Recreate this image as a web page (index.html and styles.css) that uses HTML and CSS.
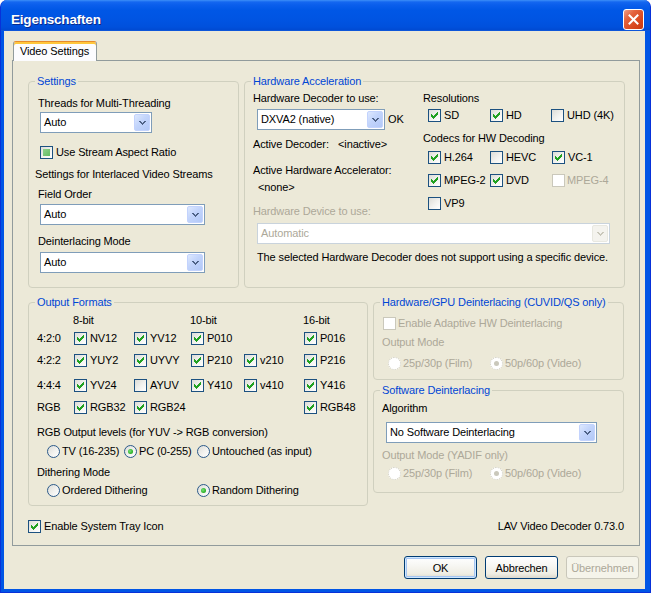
FILE: index.html
```html
<!DOCTYPE html>
<html lang="de">
<head>
<meta charset="utf-8">
<title>Eigenschaften</title>
<link rel="stylesheet" href="styles.css">
</head>
<body>
<svg class="defs" width="0" height="0" aria-hidden="true">
  <defs>
    <symbol id="ck" viewBox="0 0 11 11"><path d="M8 2h1v1h-1z M7 3h2v1h-2z M2 4h1v1h-1z M6 4h3v1h-3z M2 5h2v1h-2z M5 5h3v1h-3z M2 6h5v1h-5z M3 7h3v1h-3z M4 8h1v1h-1z" fill="#21a121" shape-rendering="crispEdges"/></symbol>
    <symbol id="dd" viewBox="0 0 7 4"><path d="M0 0h2v1h-2z M5 0h2v1h-2z M1 1h2v1h-2z M4 1h2v1h-2z M2 2h3v1h-3z M3 3h1v1h-1z" fill="currentColor" shape-rendering="crispEdges"/></symbol>
  </defs>
</svg>
<div class="window">
  <div class="titlebar">
    <span class="title">Eigenschaften</span>
    <span class="close"><svg width="11" height="11" viewBox="0 0 11 11"><path d="M1.5 1.5 L9.5 9.5 M9.5 1.5 L1.5 9.5" stroke="#fff" stroke-width="2" stroke-linecap="square"/></svg></span>
  </div>
  <div class="client">
    <div class="tabs"><div class="tab">Video Settings</div></div>
    <div class="panel">
      <div class="row1">
        <div class="group g-settings">
          <div class="legend">Settings</div>
          <div class="lbl l-threads">Threads for Multi-Threading</div>
          <div class="combo c-threads"><span class="val">Auto</span><span class="drop"><svg class="chev"><use href="#dd"/></svg></span></div>
          <div class="chk c-aspect"><span class="cb"><span class="ind"></span></span>Use Stream Aspect Ratio</div>
          <div class="lbl l-inter">Settings for Interlaced Video Streams</div>
          <div class="lbl l-field">Field Order</div>
          <div class="combo c-field"><span class="val">Auto</span><span class="drop"><svg class="chev"><use href="#dd"/></svg></span></div>
          <div class="lbl l-deint">Deinterlacing Mode</div>
          <div class="combo c-deint"><span class="val">Auto</span><span class="drop"><svg class="chev"><use href="#dd"/></svg></span></div>
        </div>
        <div class="group g-hw">
          <div class="legend">Hardware Acceleration</div>
          <div class="hw-cols">
            <div class="hw-left">
              <div class="lbl">Hardware Decoder to use:</div>
              <div class="dec-row">
                <div class="combo c-dec"><span class="val">DXVA2 (native)</span><span class="drop"><svg class="chev"><use href="#dd"/></svg></span></div>
                <span class="ok">OK</span>
              </div>
              <div class="kv"><span class="k">Active Decoder:</span><span>&lt;inactive&gt;</span></div>
              <div class="lbl l-acc">Active Hardware Accelerator:</div>
              <div class="lbl l-none">&lt;none&gt;</div>
              <div class="lbl dis l-dev">Hardware Device to use:</div>
            </div>
            <div class="hw-right">
              <div class="lbl">Resolutions</div>
              <div class="cbgrid res">
                <div class="chk"><span class="cb"><svg class="ck"><use href="#ck"/></svg></span>SD</div>
                <div class="chk"><span class="cb"><svg class="ck"><use href="#ck"/></svg></span>HD</div>
                <div class="chk"><span class="cb"></span>UHD (4K)</div>
              </div>
              <div class="lbl l-codecs">Codecs for HW Decoding</div>
              <div class="cbgrid codecs">
                <div class="chk"><span class="cb"><svg class="ck"><use href="#ck"/></svg></span>H.264</div>
                <div class="chk"><span class="cb"></span>HEVC</div>
                <div class="chk"><span class="cb"><svg class="ck"><use href="#ck"/></svg></span>VC-1</div>
                <div class="chk"><span class="cb"><svg class="ck"><use href="#ck"/></svg></span>MPEG-2</div>
                <div class="chk"><span class="cb"><svg class="ck"><use href="#ck"/></svg></span>DVD</div>
                <div class="chk dis"><span class="cb"></span>MPEG-4</div>
                <div class="chk"><span class="cb"></span>VP9</div>
              </div>
            </div>
          </div>
          <div class="combo disabled c-dev"><span class="val">Automatic</span><span class="drop"><svg class="chev"><use href="#dd"/></svg></span></div>
          <div class="lbl note">The selected Hardware Decoder does not support using a specific device.</div>
        </div>
      </div>
      <div class="row2">
        <div class="group g-out">
          <div class="legend">Output Formats</div>
          <div class="fmt-grid">
            <span></span><span class="hdr">8-bit</span><span></span><span class="hdr">10-bit</span><span></span><span class="hdr">16-bit</span>

            <span class="rl">4:2:0</span>
            <div class="chk"><span class="cb"><svg class="ck"><use href="#ck"/></svg></span>NV12</div>
            <div class="chk"><span class="cb"><svg class="ck"><use href="#ck"/></svg></span>YV12</div>
            <div class="chk"><span class="cb"><svg class="ck"><use href="#ck"/></svg></span>P010</div>
            <span></span>
            <div class="chk"><span class="cb"><svg class="ck"><use href="#ck"/></svg></span>P016</div>

            <span class="rl">4:2:2</span>
            <div class="chk"><span class="cb"><svg class="ck"><use href="#ck"/></svg></span>YUY2</div>
            <div class="chk"><span class="cb"><svg class="ck"><use href="#ck"/></svg></span>UYVY</div>
            <div class="chk"><span class="cb"><svg class="ck"><use href="#ck"/></svg></span>P210</div>
            <div class="chk"><span class="cb"><svg class="ck"><use href="#ck"/></svg></span>v210</div>
            <div class="chk"><span class="cb"><svg class="ck"><use href="#ck"/></svg></span>P216</div>

            <span class="rl">4:4:4</span>
            <div class="chk"><span class="cb"><svg class="ck"><use href="#ck"/></svg></span>YV24</div>
            <div class="chk"><span class="cb"></span>AYUV</div>
            <div class="chk"><span class="cb"><svg class="ck"><use href="#ck"/></svg></span>Y410</div>
            <div class="chk"><span class="cb"><svg class="ck"><use href="#ck"/></svg></span>v410</div>
            <div class="chk"><span class="cb"><svg class="ck"><use href="#ck"/></svg></span>Y416</div>

            <span class="rl">RGB</span>
            <div class="chk"><span class="cb"><svg class="ck"><use href="#ck"/></svg></span>RGB32</div>
            <div class="chk"><span class="cb"><svg class="ck"><use href="#ck"/></svg></span>RGB24</div>
            <span></span>
            <span></span>
            <div class="chk"><span class="cb"><svg class="ck"><use href="#ck"/></svg></span>RGB48</div>
          </div>
          <div class="lbl l-levels">RGB Output levels (for YUV -&gt; RGB conversion)</div>
          <div class="radios r-levels">
            <div class="chk"><span class="rb"></span>TV (16-235)</div>
            <div class="chk"><span class="rb on"></span>PC (0-255)</div>
            <div class="chk"><span class="rb"></span>Untouched (as input)</div>
          </div>
          <div class="lbl l-dith">Dithering Mode</div>
          <div class="radios r-dith">
            <div class="chk"><span class="rb"></span>Ordered Dithering</div>
            <div class="chk"><span class="rb on"></span>Random Dithering</div>
          </div>
        </div>
        <div class="col-right">
          <div class="group g-gpu">
            <div class="legend">Hardware/GPU Deinterlacing (CUVID/QS only)</div>
            <div class="chk dis c-adapt"><span class="cb"></span>Enable Adaptive HW Deinterlacing</div>
            <div class="lbl dis l-om">Output Mode</div>
            <div class="radios r-mode">
              <div class="chk dis"><span class="rb"></span>25p/30p (Film)</div>
              <div class="chk dis"><span class="rb on"></span>50p/60p (Video)</div>
            </div>
          </div>
          <div class="group g-sw">
            <div class="legend">Software Deinterlacing</div>
            <div class="lbl l-alg">Algorithm</div>
            <div class="combo c-alg"><span class="val">No Software Deinterlacing</span><span class="drop"><svg class="chev"><use href="#dd"/></svg></span></div>
            <div class="lbl dis l-om2">Output Mode (YADIF only)</div>
            <div class="radios r-mode r-mode2">
              <div class="chk dis"><span class="rb"></span>25p/30p (Film)</div>
              <div class="chk dis"><span class="rb on"></span>50p/60p (Video)</div>
            </div>
          </div>
        </div>
      </div>
      <div class="row3">
        <div class="chk"><span class="cb"><svg class="ck"><use href="#ck"/></svg></span>Enable System Tray Icon</div>
        <span class="version">LAV Video Decoder 0.73.0</span>
      </div>
    </div>
    <div class="buttons">
      <button class="btn default" type="button">OK</button>
      <button class="btn" type="button">Abbrechen</button>
      <button class="btn disabled" type="button">Übernehmen</button>
    </div>
  </div>
</div>
</body>
</html>
```
FILE: styles.css
```css
* { box-sizing: border-box; }
html, body { margin: 0; padding: 0; }
body {
  width: 651px;
  height: 593px;
  overflow: hidden;
  background: #ffffff;
  font-family: "Liberation Sans", Arial, sans-serif;
  font-size: 11px;
  line-height: 13px;
  letter-spacing: -0.12px;
  color: #000;
}
.defs { display: block; width: 0; height: 0; overflow: hidden; }

.window {
  width: 651px;
  height: 593px;
  display: flex;
  flex-direction: column;
  background: #0055e5;
  border: 1px solid #0831d9;
  border-top: none;
  border-radius: 7px 7px 0 0;
  overflow: hidden;
}

.titlebar {
  height: 31px;
  flex: none;
  display: flex;
  align-items: flex-start;
  justify-content: space-between;
  padding: 0 6px 0 10px;
  background: linear-gradient(to bottom,
    #3d8ff8 0px, #1467f0 2px, #0a5eec 5px, #0057e6 10px,
    #0054e2 20px, #0050dc 27px, #004ad2 30px, #1a62e0 31px);
}
.title {
  margin-top: 12px;
  color: #fff;
  font-weight: bold;
  font-size: 13.5px;
  line-height: 16px;
  letter-spacing: -0.2px;
  text-shadow: 1px 1px 0 #0a2a8a;
}
.close {
  margin-top: 9px;
  width: 21px;
  height: 21px;
  border: 1px solid #fff;
  border-radius: 3px;
  background: linear-gradient(135deg, #f0a088 0%, #e4643f 30%, #d8461d 70%, #c63a12 100%);
  display: flex;
  align-items: center;
  justify-content: center;
}

.client {
  flex: 1;
  margin: 0 5px 3px 3px;
  background: #ece9d8;
  display: flex;
  flex-direction: column;
}

.tabs {
  margin: 10px 0 0 9px;
  display: flex;
}
.tab {
  position: relative;
  z-index: 1;
  width: 84px;
  height: 20px;
  padding-left: 6px;
  display: flex;
  align-items: center;
  background: #fcfcfe;
  border: 1px solid #919b9c;
  border-top: 1px solid #e68b2c;
  border-bottom: none;
  border-radius: 3px 3px 0 0;
  box-shadow: inset 0 2px 0 #ffc73c;
}

.panel {
  margin: -1px 0 0 8px;
  width: 628px;
  height: 486px;
  border: 1px solid #919b9c;
  background: #ece9d8;
  padding: 20px 0 0 15px;
}

.group {
  border: 1px solid #d0d0bf;
  border-radius: 4px;
}
.legend {
  width: max-content;
  margin: -7px 0 0 6px;
  padding: 0 2px;
  background: #ece9d8;
  color: #0046d5;
}
.lbl { white-space: nowrap; }
.dis { color: #aca899; }

/* combobox */
.combo {
  display: flex;
  height: 21px;
  border: 1px solid #7f9db9;
  background: #fff;
}
.combo .val {
  flex: 1;
  padding-left: 3px;
  line-height: 19px;
  white-space: nowrap;
  overflow: hidden;
}
.combo .drop {
  width: 16px;
  margin: 1px;
  border: 1px solid #c3d3fd;
  border-radius: 2px;
  background: linear-gradient(135deg, #dde8fe 0%, #c2d4fb 45%, #b2c8f7 100%);
  display: flex;
  align-items: center;
  justify-content: center;
  color: #4d6185;
}
.chev { width: 7px; height: 4px; display: block; }
.combo.disabled { border-color: #c9d3dc; }
.combo.disabled .val { color: #aca899; }
.combo.disabled .drop {
  border-color: #e8e8e0;
  background: #f4f3ee;
  color: #c9c7ba;
}

/* checkbox */
.chk {
  display: flex;
  align-items: center;
  gap: 3px;
  height: 13px;
  white-space: nowrap;
}
.cb {
  flex: none;
  width: 13px;
  height: 13px;
  border: 1px solid #1c5180;
  background: linear-gradient(135deg, #dcdcd7 0%, #f2f2ef 55%, #ffffff 100%);
  display: flex;
  align-items: center;
  justify-content: center;
}
.ck { width: 11px; height: 11px; display: block; }
.cb .ind {
  width: 7px;
  height: 7px;
  background: linear-gradient(135deg, #8fd28c, #63bb63);
}
.chk.dis .cb { border-color: #cac8bb; background: #fff; }

/* radio */
.rb {
  flex: none;
  width: 13px;
  height: 13px;
  border-radius: 50%;
  border: 1px solid #2b5a8a;
  background: linear-gradient(135deg, #dcdcd7 0%, #f2f2ef 55%, #ffffff 100%);
  display: flex;
  align-items: center;
  justify-content: center;
}
.rb.on::after {
  content: "";
  width: 5px;
  height: 5px;
  border-radius: 50%;
  background: radial-gradient(circle at 40% 40%, #7be078 0%, #2fb52b 60%, #1b8e18 100%);
}
.chk.dis .rb { border: 1px dotted #cac8bb; background: #fff; }
.chk.dis .rb.on::after { background: #cac8bb; }
.chk.dis { gap: 2px; }
.radios .chk { gap: 2px; }

/* rows */
.row1 { display: flex; gap: 5px; height: 207px; }
.g-settings { width: 211px; }
.g-hw { width: 381px; }

.l-threads { margin: 9px 0 0 9px; }
.c-threads { margin: 2px 0 0 11px; width: 112px; }
.c-aspect { margin: 13px 0 0 11px; }
.l-inter { margin: 9px 0 0 6px; }
.l-field { margin: 7px 0 0 9px; }
.c-field { margin: 3px 0 0 11px; width: 165px; }
.l-deint { margin: 10px 0 0 9px; }
.c-deint { margin: 4px 0 0 11px; width: 165px; }

.hw-cols {
  display: grid;
  grid-template-columns: 170px 1fr;
  height: 126px;
  margin: 4px 0 0 8px;
}
.dec-row { display: flex; align-items: center; margin: 4px 0 0 4px; }
.c-dec { width: 128px; }
.ok { margin-left: 3px; }
.kv { display: flex; margin-top: 8px; }
.kv .k { width: 85px; }
.l-acc { margin-top: 13px; }
.l-none { margin: 4px 0 0 5px; }
.l-dev { margin-top: 11px; }
.cbgrid { display: grid; margin-left: 5px; }
.res { margin-top: 4px; grid-template-columns: 62px 61px auto; }
.l-codecs { margin-top: 10px; }
.codecs { margin-top: 6px; grid-template-columns: 62px 62px auto; row-gap: 10px; }
.c-dev { margin: 5px 0 0 12px; width: 353px; }
.note { margin: 7px 0 0 12px; }

.row2 { display: flex; gap: 5px; margin-top: 14px; height: 204px; }
.g-out { width: 340px; }
.fmt-grid {
  display: grid;
  grid-template-columns: 37px 60px 57px 53px 60px auto;
  grid-template-rows: 16px 20px 24px 26px 18px;
  align-items: center;
  margin: 3px 0 0 8px;
}
.hdr { margin-left: -1px; }
.l-levels { margin: 10px 0 0 8px; }
.radios { display: grid; }
.r-levels { margin: 6px 0 0 18px; grid-template-columns: 77px 73px auto; }
.l-dith { margin: 8px 0 0 8px; }
.r-dith { margin: 5px 0 0 18px; grid-template-columns: 150px auto; }

.col-right { width: 251px; display: flex; flex-direction: column; gap: 10px; }
.g-gpu { height: 78px; }
.g-sw { height: 103px; }
.c-adapt { margin: 8px 0 0 9px; }
.c-adapt { gap: 3px; }
.l-om { margin: 6px 0 0 8px; }
.r-mode { margin: 8px 0 0 14px; grid-template-columns: 102px auto; }
.l-alg { margin: 5px 0 0 8px; }
.c-alg { margin: 7px 0 0 12px; width: 211px; }
.l-om2 { margin: 6px 0 0 8px; }
.r-mode2 { margin-top: 5px; }

.row3 {
  display: flex;
  justify-content: space-between;
  align-items: center;
  margin: 14px 15px 0 0;
  height: 13px;
}

.buttons {
  display: flex;
  justify-content: flex-end;
  gap: 8px;
  margin: 10px 6px 0 0;
}
.btn {
  width: 73px;
  height: 23px;
  padding: 0;
  border: 1px solid #003c74;
  border-radius: 3px;
  background: linear-gradient(to bottom, #ffffff 0%, #f8f8f5 35%, #efede3 80%, #dcd8cc 100%);
  font-family: "Liberation Sans", Arial, sans-serif;
  font-size: 11px;
  letter-spacing: -0.12px;
  color: #000;
  display: flex;
  align-items: center;
  justify-content: center;
}
.btn.default {
  box-shadow: inset 0 0 0 1px #cee7ff, inset 0 0 0 2px #a6c5f1;
}
.btn.disabled {
  border-color: #c9c7ba;
  color: #aca899;
  background: #f5f4ea;
}
```
